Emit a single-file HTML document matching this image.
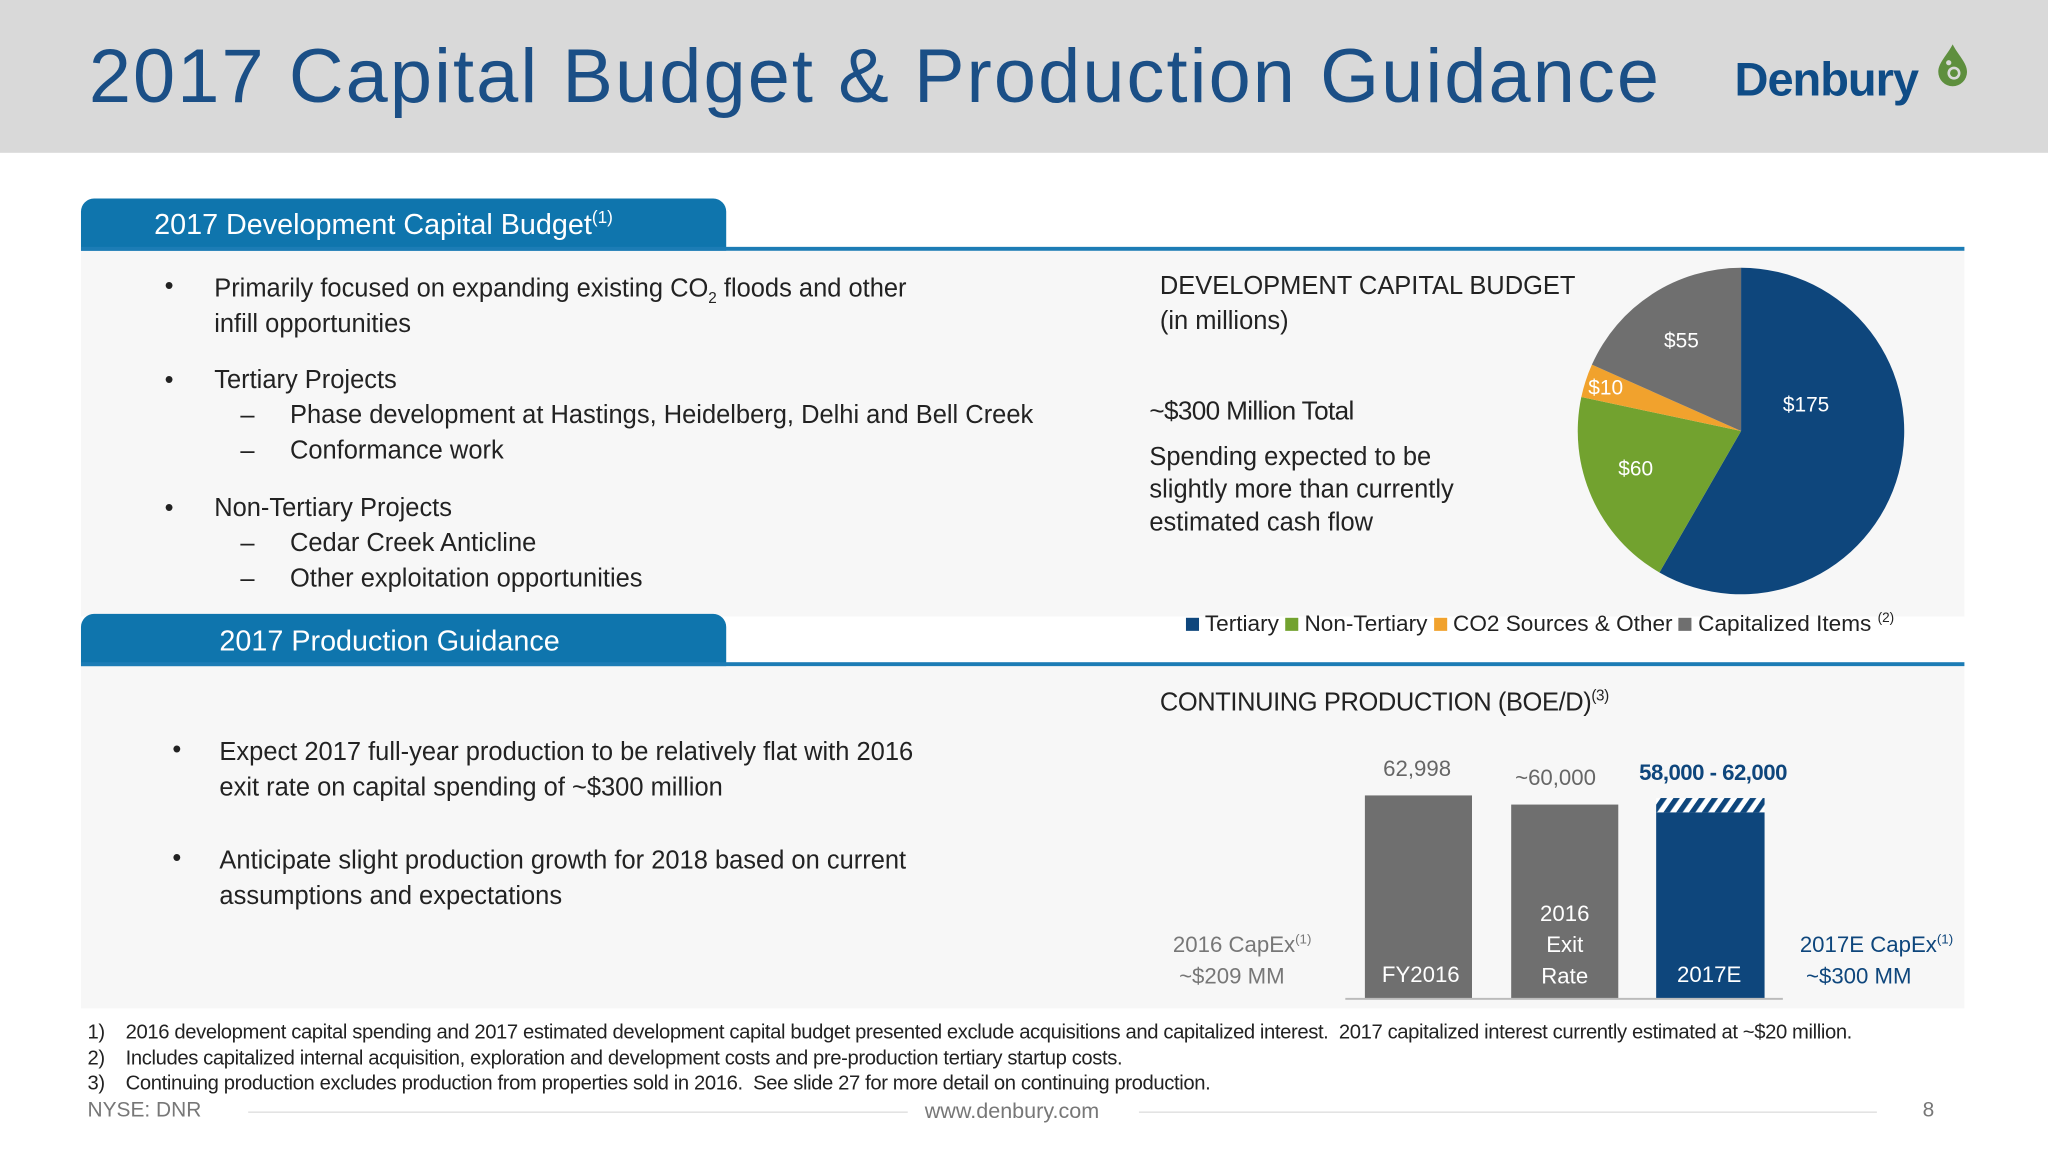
<!DOCTYPE html>
<html><head><meta charset="utf-8"><style>
html,body{margin:0;padding:0;background:#fff;overflow:hidden}
body{width:2048px;height:1152px}
#w{position:absolute;left:0;top:0;width:1568px;height:882px;transform:scale(1.306122);transform-origin:0 0;font-family:"Liberation Sans",sans-serif;color:#222}
.a{position:absolute;white-space:nowrap}
.hdr{position:absolute;left:0;top:0;width:1568px;height:117px;background:#d9d9d9}
.tab{position:absolute;left:62px;width:494px;height:40px;background:#0f75ad;border-radius:10px 10px 0 0;color:#fff;font-size:22px}
.line{position:absolute;left:62px;width:1442px;height:3px;background:#1c7cb5}
.panel{position:absolute;left:62px;background:#f7f7f7}
.t{font-size:19.5px;color:#222}
sup{font-size:60%;vertical-align:super;line-height:0}
sub{font-size:60%;line-height:0}
</style></head><body><div id="w">
<div class="hdr"></div>
<div class="a" style="left:68px;top:25px;font-size:58px;color:#1b4f86;letter-spacing:1.6px">2017 Capital Budget &amp; Production Guidance</div>
<div class="a" style="left:1328px;top:40px;font-size:36px;font-weight:bold;color:#0f4c86;letter-spacing:-0.8px">Denbury</div>
<svg class="a" style="left:1480px;top:32px" width="30" height="38" viewBox="0 0 30 38"><path d="M15 2 C19 10 26 16 26 23 A11 11 0 0 1 4 23 C4 16 11 10 15 2Z" fill="#5e8f3e"/><circle cx="16" cy="24" r="5" fill="#d9d9d9"/><circle cx="16" cy="24" r="3" fill="#5e8f3e"/><circle cx="12" cy="16" r="2" fill="#d9d9d9"/></svg>

<div class="panel" style="top:192px;width:1442px;height:280px"></div>
<div class="panel" style="top:510px;width:1442px;height:262px"></div>
<div class="tab" style="top:152px"><span class="a" style="left:56px;top:7px">2017 Development Capital Budget<sup>(1)</sup></span></div>
<div class="line" style="top:189px"></div>
<div class="tab" style="top:470px"><span class="a" style="left:106px;top:8px">2017 Production Guidance</span></div>
<div class="line" style="top:507px"></div>

<div class="a t" style="left:126px;top:208px">•</div>
<div class="a t" style="left:164px;top:208px;line-height:27px">Primarily focused on expanding existing CO<sub>2</sub> floods and other<br>infill opportunities</div>
<div class="a t" style="left:126px;top:280px">•</div>
<div class="a t" style="left:164px;top:280px">Tertiary Projects</div>
<div class="a t" style="left:184px;top:307px">–</div>
<div class="a t" style="left:222px;top:307px">Phase development at Hastings, Heidelberg, Delhi and Bell Creek</div>
<div class="a t" style="left:184px;top:334px">–</div>
<div class="a t" style="left:222px;top:334px">Conformance work</div>
<div class="a t" style="left:126px;top:378px">•</div>
<div class="a t" style="left:164px;top:378px">Non-Tertiary Projects</div>
<div class="a t" style="left:184px;top:405px">–</div>
<div class="a t" style="left:222px;top:405px">Cedar Creek Anticline</div>
<div class="a t" style="left:184px;top:432px">–</div>
<div class="a t" style="left:222px;top:432px">Other exploitation opportunities</div>

<div class="a t" style="left:888px;top:206px;line-height:27px">DEVELOPMENT CAPITAL BUDGET<br>(in millions)</div>
<div class="a" style="left:880px;top:304px;font-size:20px;letter-spacing:-0.5px">~$300 Million Total</div>
<div class="a t" style="left:880px;top:338px;line-height:25px">Spending expected to be<br>slightly more than currently<br>estimated cash flow</div>

<svg class="a" style="left:0;top:0" width="1568" height="500">
<path d="M1333 330 L1333 205 A125 125 0 1 1 1270.5 438.3Z" fill="#0e467c"/>
<path d="M1333 330 L1270.5 438.3 A125 125 0 0 1 1210.7 304Z" fill="#72a22f"/>
<path d="M1333 330 L1210.7 304 A125 125 0 0 1 1218.8 279.2Z" fill="#f1a22d"/>
<path d="M1333 330 L1218.8 279.2 A125 125 0 0 1 1333 205Z" fill="#6f6f6f"/>
<g fill="#fff" font-family="Liberation Sans" font-size="16"><text x="1365" y="315">$175</text><text x="1239" y="364">$60</text><text x="1216" y="302">$10</text><text x="1274" y="266">$55</text></g>
</svg>
<div class="a" style="left:908px;top:467px;font-size:17.3px;color:#222">
<span style="display:inline-block;width:10px;height:10px;background:#0e467c"></span> Tertiary <span style="display:inline-block;width:10px;height:10px;background:#72a22f"></span> Non-Tertiary <span style="display:inline-block;width:10px;height:10px;background:#f1a22d"></span> CO2 Sources &amp; Other <span style="display:inline-block;width:10px;height:10px;background:#6f6f6f"></span> Capitalized Items <sup>(2)</sup></div>

<div class="a t" style="left:132px;top:563px">•</div>
<div class="a t" style="left:168px;top:563px;line-height:27px">Expect 2017 full-year production to be relatively flat with 2016<br>exit rate on capital spending of ~$300 million</div>
<div class="a t" style="left:132px;top:646px">•</div>
<div class="a t" style="left:168px;top:646px;line-height:27px">Anticipate slight production growth for 2018 based on current<br>assumptions and expectations</div>

<div class="a t" style="left:888px;top:527px;letter-spacing:-0.3px">CONTINUING PRODUCTION (BOE/D)<sup>(3)</sup></div>
<svg class="a" style="left:0;top:0" width="1568" height="800">
<defs><pattern id="h" width="8" height="8" patternUnits="userSpaceOnUse" patternTransform="rotate(35)"><rect width="8" height="8" fill="#fff"/><rect width="4" height="8" fill="#0e467c"/></pattern></defs>
<rect x="1045" y="609" width="82" height="156" fill="#6f6f6f"/>
<rect x="1157" y="616" width="82" height="149" fill="#6f6f6f"/>
<rect x="1268" y="611" width="83" height="11" fill="url(#h)"/>
<rect x="1268" y="622" width="83" height="143" fill="#0e467c"/>
<rect x="1030" y="764" width="335" height="1.5" fill="#bbb"/>
</svg>
<div class="a" style="left:1059px;top:579px;font-size:17px;color:#666">62,998</div>
<div class="a" style="left:1160px;top:586px;font-size:17px;color:#666">~60,000</div>
<div class="a" style="left:1255px;top:582px;font-size:17px;color:#0e467c;font-weight:bold;letter-spacing:-0.4px">58,000 - 62,000</div>
<div class="a" style="left:1058px;top:737px;font-size:17px;color:#fff">FY2016</div>
<div class="a" style="left:1157px;top:688px;width:82px;text-align:center;font-size:17px;color:#fff;line-height:24px">2016<br>Exit<br>Rate</div>
<div class="a" style="left:1284px;top:737px;font-size:17px;color:#fff">2017E</div>
<div class="a" style="left:898px;top:712px;font-size:17px;color:#777;line-height:24px">2016 CapEx<sup>(1)</sup><br>&nbsp;~$209 MM</div>
<div class="a" style="left:1378px;top:712px;font-size:17px;color:#0e467c;line-height:24px">2017E CapEx<sup>(1)</sup><br>&nbsp;~$300 MM</div>

<div class="a" style="left:67px;top:781px;font-size:15.5px;color:#222;line-height:19.7px;letter-spacing:-0.3px">1)&nbsp;&nbsp;&nbsp;&nbsp;2016 development capital spending and 2017 estimated development capital budget presented exclude acquisitions and capitalized interest.&nbsp; 2017 capitalized interest currently estimated at ~$20 million.<br>2)&nbsp;&nbsp;&nbsp;&nbsp;Includes capitalized internal acquisition, exploration and development costs and pre-production tertiary startup costs.<br>3)&nbsp;&nbsp;&nbsp;&nbsp;Continuing production excludes production from properties sold in 2016.&nbsp; See slide 27 for more detail on continuing production.</div>
<div class="a" style="left:67px;top:842px;font-size:16px;color:#777">NYSE: DNR</div>
<div class="a" style="left:190px;top:851px;width:505px;height:1px;background:#ddd"></div>
<div class="a" style="left:708px;top:842px;font-size:16.5px;color:#777">www.denbury.com</div>
<div class="a" style="left:872px;top:851px;width:565px;height:1px;background:#ddd"></div>
<div class="a" style="left:1472px;top:842px;font-size:16px;color:#777">8</div>
</div></body></html>
